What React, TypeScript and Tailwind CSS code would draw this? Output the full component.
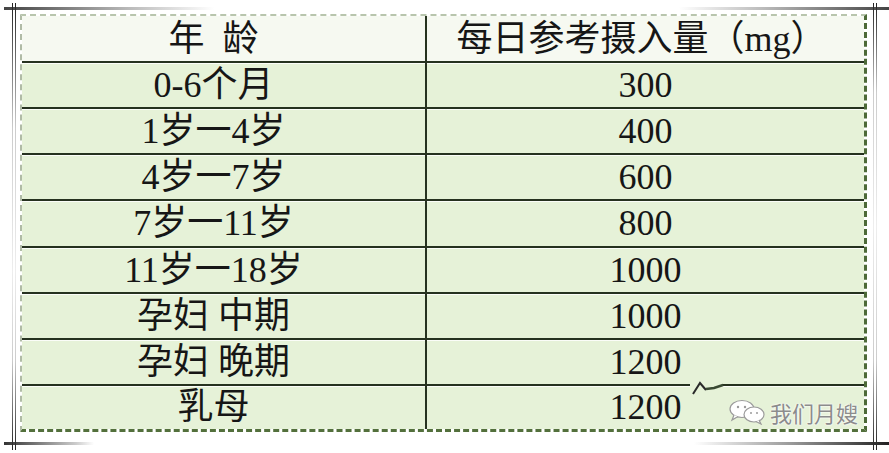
import React from "react";

const rows: [string, string][] = [
  ["0-6个月", "300"],
  ["1岁一4岁", "400"],
  ["4岁一7岁", "600"],
  ["7岁一11岁", "800"],
  ["11岁一18岁", "1000"],
  ["孕妇 中期", "1000"],
  ["孕妇 晚期", "1200"],
  ["乳母", "1200"],
];

const font = "font-['Liberation_Serif','Noto_Sans_CJK_SC',serif]";

const Row = ({ age, amount, last }: { age: string; amount: string; last?: boolean }) => (
  <div
    className={
      last
        ? "flex h-[43px] bg-[#e6f2d8] shadow-[inset_0_1px_0_#fbfdf8]"
        : "flex h-[46.14px] border-b-2 border-[#26321f] bg-[#e6f2d8] shadow-[inset_0_1px_0_#fbfdf8]"
    }
  >
    <div className="flex w-[405px] items-center justify-center border-r-2 border-[#26321f] pr-5">
      <span className="text-[36px] leading-none text-[#161616]">{age}</span>
    </div>
    <div className="flex flex-1 items-center justify-center">
      <span className="text-[36px] leading-none text-[#161616]">{amount}</span>
    </div>
  </div>
);

const WeChat = () => (
  <svg width="38" height="26" viewBox="0 0 38 26">
    <ellipse cx="14" cy="10" rx="12" ry="8.5" fill="#fff" stroke="#9a9a9a" strokeWidth="1.2" />
    <path d="M6 16 L4 21 L10 17.5" fill="#fff" stroke="#9a9a9a" strokeWidth="1.2" />
    <circle cx="10" cy="8" r="1.2" fill="#9a9a9a" />
    <circle cx="17" cy="8" r="1.2" fill="#9a9a9a" />
    <ellipse cx="26" cy="15.5" rx="10" ry="7.5" fill="#fff" stroke="#9a9a9a" strokeWidth="1.2" />
    <path d="M31 21 L33 25 L28 22.5" fill="#fff" stroke="#9a9a9a" strokeWidth="1.2" />
    <circle cx="23" cy="14" r="1" fill="#9a9a9a" />
    <circle cx="29" cy="14" r="1" fill="#9a9a9a" />
  </svg>
);

export default function App() {
  return (
    <div className={`relative h-[453px] w-[889px] overflow-hidden bg-white pl-[20px] pt-[14px] ${font}`}>
      {/* frame decoration */}
      <div className="absolute left-[4px] top-[7px] h-[3px] w-[210px] bg-[linear-gradient(to_right,#444,#bbb_60%,transparent)]" />
      <div className="absolute right-0 top-[7px] h-[3px] w-[210px] bg-[linear-gradient(to_left,#444,#bbb_60%,transparent)]" />
      <div className="absolute bottom-[8px] left-[4px] h-[3px] w-[90px] bg-[linear-gradient(to_right,#333,#ccc_80%,transparent)]" />
      <div className="absolute bottom-[8px] right-0 h-[3px] w-[195px] bg-[linear-gradient(to_left,#222,#999_50%,transparent)]" />
      <div className="absolute left-[12px] top-[3px] h-[447px] w-px bg-[linear-gradient(to_bottom,#222,#ccc_28%,#eee_60%,#ccc_80%,#222)]" />
      <div className="absolute left-[15px] top-[3px] h-[447px] w-px bg-[linear-gradient(to_bottom,#222,#ccc_28%,#eee_60%,#ccc_80%,#222)]" />
      <div className="absolute left-[873px] top-[3px] h-[447px] w-px bg-[linear-gradient(to_bottom,#222,#ccc_20%,#eee_50%,#ccc_80%,#222)]" />
      <div className="absolute left-[876px] top-[3px] h-[447px] w-px bg-[linear-gradient(to_bottom,#222,#ccc_20%,#eee_50%,#ccc_80%,#222)]" />

      <div className="w-[847px] border-b-[3px] border-l-2 border-r-[3px] border-t-2 border-dashed border-b-[#53703c] border-l-[#b0bba6] border-r-[#4d6a38] border-t-[#b8c5ad]">
        <div className="flex h-[47px] border-b-2 border-[#26321f] bg-[#f6f9f1]">
          <div className="flex w-[405px] items-center justify-center border-r-2 border-[#26321f] pr-5">
            <span className="text-[36px] leading-none text-[#161616]">年{"\u2002"}龄</span>
          </div>
          <div className="flex flex-1 items-center justify-center pr-2">
            <span className="text-[36px] leading-none text-[#161616]">每日参考摄入量（mg）</span>
          </div>
        </div>
        {rows.map(([a, b], i) => (
          <Row key={i} age={a} amount={b} last={i === rows.length - 1} />
        ))}
      </div>

      {/* scan artefact over the line */}
      <svg className="absolute left-[690px] top-[376px]" width="34" height="22" viewBox="0 0 34 22">
        <rect x="0" y="7" width="32" height="5" fill="#e6f2d8" />
        <path d="M3 18 L10 7 L16 14" fill="none" stroke="#2a2a2a" strokeWidth="2" />
        <path d="M16 13 L24 12 L33 9" fill="none" stroke="#3a4a33" strokeWidth="2.5" />
      </svg>

      <div className="absolute left-[728px] top-[399px] flex items-center gap-1">
        <WeChat />
        <span className="font-['Noto_Sans_CJK_SC',sans-serif] text-[22px] leading-none text-[#8c8c8c] [text-shadow:0_0_2px_#fff,0_0_2px_#fff]">
          我们月嫂
        </span>
      </div>
    </div>
  );
}
